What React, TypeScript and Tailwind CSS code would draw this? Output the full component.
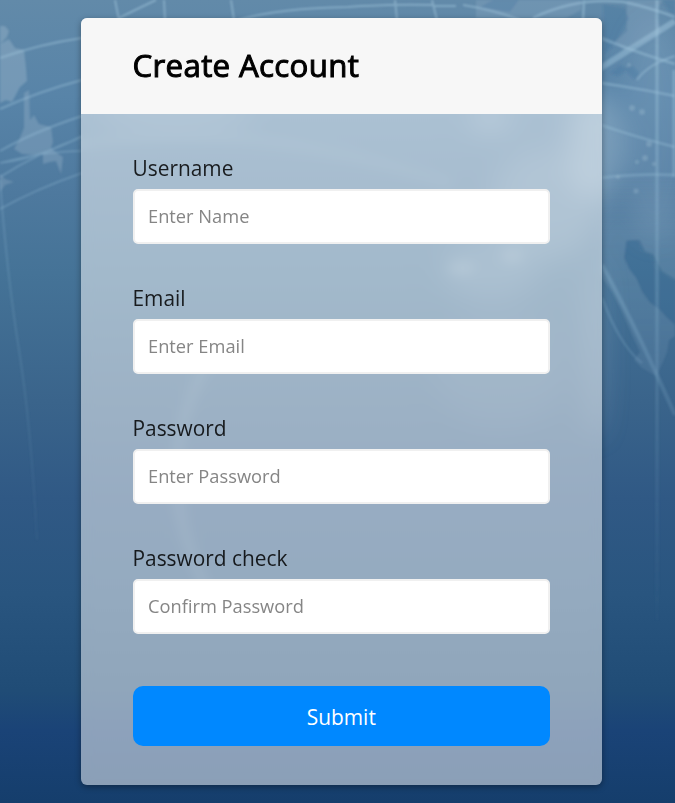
import React from "react";

type Field = { id: string; label: string; placeholder: string; type: string; gap: string };

const fields: Field[] = [
  { id: "username", label: "Username", placeholder: "Enter Name", type: "text", gap: "mb-[39px]" },
  { id: "email", label: "Email", placeholder: "Enter Email", type: "email", gap: "mb-[39px]" },
  { id: "password", label: "Password", placeholder: "Enter Password", type: "password", gap: "mb-[39px]" },
  { id: "password2", label: "Password check", placeholder: "Confirm Password", type: "password", gap: "mb-[52px]" },
];

/** World-map backdrop: a deep blue gradient with faint landmasses and orbit lines. */
function Backdrop() {
  return (
    <svg className="absolute inset-0 h-full w-full" viewBox="0 0 675 803" preserveAspectRatio="none" aria-hidden="true">
      <defs>
        <linearGradient id="sky" x1="0" y1="0" x2="0" y2="1">
          <stop offset="0" stopColor="#628aa9" />
          <stop offset="0.12" stopColor="#5884a8" />
          <stop offset="0.24" stopColor="#4e799e" />
          <stop offset="0.34" stopColor="#457397" />
          <stop offset="0.5" stopColor="#3a648b" />
          <stop offset="0.62" stopColor="#305985" />
          <stop offset="0.74" stopColor="#29557f" />
          <stop offset="0.86" stopColor="#204c76" />
          <stop offset="0.91" stopColor="#1a4377" />
          <stop offset="1" stopColor="#153e6c" />
        </linearGradient>
        <linearGradient id="line" x1="0" y1="0" x2="0" y2="650" gradientUnits="userSpaceOnUse">
          <stop offset="0" stopColor="#a5c9df" stopOpacity="0.5" />
          <stop offset="0.5" stopColor="#86b1cd" stopOpacity="0.3" />
          <stop offset="1" stopColor="#7098bd" stopOpacity="0" />
        </linearGradient>
        <linearGradient id="coast" x1="0" y1="170" x2="0" y2="390" gradientUnits="userSpaceOnUse">
          <stop offset="0" stopColor="#9ab4cb" stopOpacity="0" />
          <stop offset="0.3" stopColor="#9ab4cb" stopOpacity="0.22" />
          <stop offset="1" stopColor="#8aa8c6" stopOpacity="0.14" />
        </linearGradient>
        <filter id="soft" x="-5%" y="-5%" width="110%" height="110%"><feGaussianBlur stdDeviation="0.8" /></filter>
        <filter id="cloud" x="-100%" y="-50%" width="300%" height="200%"><feGaussianBlur stdDeviation="13" /></filter>
      </defs>
      <rect width="675" height="803" fill="url(#sky)" />
      <g filter="url(#cloud)" fill="#b5cede">
        <ellipse cx="596" cy="146" rx="28" ry="54" opacity="0.38" />
        <ellipse cx="655" cy="130" rx="34" ry="110" opacity="0.16" />
        <ellipse cx="545" cy="205" rx="55" ry="55" opacity="0.2" />
        <ellipse cx="490" cy="270" rx="48" ry="30" opacity="0.16" />
        <ellipse cx="490" cy="119" rx="20" ry="8" opacity="0.5" />
        <ellipse cx="596" cy="350" rx="8" ry="90" opacity="0.24" />
        <ellipse cx="500" cy="370" rx="65" ry="60" opacity="0.06" />
        <ellipse cx="175" cy="115" rx="80" ry="14" opacity="0.2" />
      </g>
      <g filter="url(#soft)">
        <g fill="#9ab4cb">
          <path opacity=".42" d="M0 26l5 0 4 5-2 6-7 7 9-5 6 9 9 2 2 18 1 13-7 6-8 15-6-2-6 3z" />
          <path opacity=".35" d="M24 93l5-3 1 30 4-5 5 9 12 3 2 15-2 6 6 5 6 4-2 17-5-13-6 1-7 2 0-10-9 1-12-1-8-5 5-9 5-12z" />
          <path opacity=".3" d="M0 174l5 5 9 3-9 3-5 7z" />
          <path opacity=".24" d="M476 0h105v10l-15 8h-90zM627 0h35l-6 14 5 18-22 12-15 6-9-8 12-11z" />
        </g>
        <path
          fill="url(#coast)"
          d="M600 170H690V288L675 279 662 271 653 254 645 251 640 240 627 240 624 258 630 270 636 278 642 292 650 303 659 309 667 318 675 325V336L669 340 667 352 663 362 656 376 642 368 634 360 640 352 632 335 622 312 612 292 600 275Z"
        />
        <g fill="#2e6294">
          <path opacity=".16" d="M625 241L638 239 641 251 650 254 655 268 675 282V324L666 317 658 308 650 302 642 291 636 278 628 269 624 258Z" />
          <path opacity=".18" d="M478 8l15-8h26l-9 12zM603 4l22 4 4 11-8 15-9 13-8 6zM611 73l9-8 6 3 5-3 9 9-5 6-9-9-8 5zM662 0h13v22z" />
        </g>
        <g fill="none" stroke="url(#line)">
          <path strokeWidth="2" d="M0 58Q40 44 82 38M0 109Q40 91 82 80M0 151Q33 132 82 116" />
          <path strokeWidth="1.7" d="M0 163Q40 158 82 136M0 209Q36 189 82 173M0 177Q38 153 82 137M0 163Q46 151 82 151" />
          <path strokeWidth="2" opacity=".7" d="M0 180Q7 275 19 350T37 540" />
          <path strokeWidth="2" d="M115 0l4 20M119 18Q137 9 156 0M164 0l1 20M231 0l3 20M395 0l2 20M432 0l5 20M238 20Q280 8 348 7 404 3 456 6M463 5Q495 10 520 20" />
          <path strokeWidth="2.4" d="M533 18Q576-3 624 2 648 7 675 17M584 0l-1 20M601 38Q635 52 675 64M601 83Q637 88 675 96M601 125Q633 136 675 147M601 178Q637 173 675 175" />
          <path strokeWidth="6" d="M599 69L675 21" />
          <path strokeWidth="2" d="M637 80Q648 64 675 56" />
          <path strokeWidth="3" d="M657 0v620" />
          <path strokeWidth="3" d="M674 70v107" />
          <path strokeWidth="4" d="M602 265Q633 321 675 415" />
          <path strokeWidth="2.2" d="M602 298Q620 346 642 363" />
        </g>
        <g fill="#b3cedd" opacity=".25">
          <circle cx="629" cy="65" r="2" /><circle cx="632" cy="108" r="3" />
          <circle cx="642" cy="112" r="3" /><circle cx="645" cy="158" r="3" />
          <circle cx="637" cy="162" r="2" /><circle cx="654" cy="164" r="2" /><circle cx="636" cy="191" r="2.5" />
          <circle cx="618" cy="177" r="2" /><circle cx="649" cy="144" r="3" />
        </g>
      </g>
      <g filter="url(#soft)" fill="none" stroke="#b4ced8">
        <path strokeWidth="9" opacity=".14" d="M205 367Q174 425 177 484T217 610" />
        <path strokeWidth="10" opacity=".1" d="M80 145Q240 115 452 184" />
        <path strokeWidth="14" opacity=".2" d="M455 268h12M508 256h8" strokeLinecap="round" />
      </g>
    </svg>
  );
}

export default function App() {
  return (
    <main className="relative flex h-[803px] w-full items-start overflow-hidden pl-[80.5px] pt-[18px] font-['Open_Sans',sans-serif] text-black">
      <Backdrop />
      <section className="relative h-[767.4px] w-[521.6px] overflow-hidden rounded-[6px] bg-white/50 shadow-[0_2px_6px_rgba(0,0,0,0.35)] backdrop-blur-[6px]">
        <header className="flex h-24 items-center bg-[#f7f7f7] px-[52px] pb-px">
          <h2 className="text-[31.3px] font-normal leading-[43px] tracking-[0.3px] [-webkit-text-stroke:1px_black]">Create Account</h2>
        </header>
        <form className="flex flex-col px-[52px] pt-[39px]">
          {fields.map((field) => (
            <div key={field.id} className={`flex flex-col ${field.gap}`}>
              <label htmlFor={field.id} className="mb-[6.5px] h-[29px] text-[20.88px] leading-[30px] text-black/85">
                {field.label}
              </label>
              <input
                id={field.id}
                type={field.type}
                placeholder={field.placeholder}
                className="h-[55.5px] w-full rounded-[5px] border-[2.6px] border-[#f0f0f0] bg-white px-[13.5px] pb-px text-[18.27px] outline-none placeholder:text-[#858585]"
              />
            </div>
          ))}
          <button type="button" className="h-[60px] w-full rounded-[10px] bg-[#0088ff] pt-[2px] text-[20.88px] leading-none text-white">
            Submit
          </button>
        </form>
      </section>
    </main>
  );
}
